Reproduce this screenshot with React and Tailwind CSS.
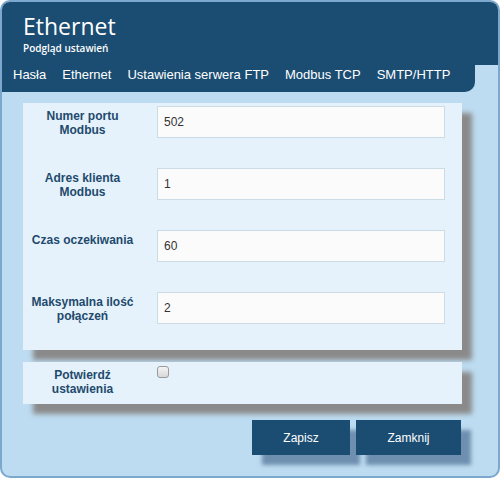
import React, { useState } from "react";

const fields = [
  { label: ["Numer portu", "Modbus"], value: "502" },
  { label: ["Adres klienta", "Modbus"], value: "1" },
  { label: ["Czas oczekiwania"], value: "60" },
  { label: ["Maksymalna ilość", "połączeń"], value: "2" },
];

const tabs = ["Hasła", "Ethernet", "Ustawienia serwera FTP", "Modbus TCP", "SMTP/HTTP"];

export default function App() {
  const [vals, setVals] = useState(fields.map(f => f.value));
  const [ok, setOk] = useState(false);

  return (
    <div className="w-[500px] h-[478px] box-border border-2 border-[#7ba8cc] rounded-[10px] bg-[#bddcf1] overflow-hidden font-['Liberation_Sans',Arial,sans-serif]">
      {/* header */}
      <div className="bg-[#1b4d72] h-[63px] pl-[21px] pt-[11px] text-white">
        <div className="font-['Open_Sans',sans-serif] text-[23px] leading-[26px]">Ethernet</div>
        <div className="font-['Open_Sans',sans-serif] font-semibold text-[10px] leading-[12px] mt-[3px]">Podgląd ustawień</div>
      </div>
      <div className="w-[473px] h-[27px] bg-[#1b4d72] rounded-br-[10px] flex items-start gap-[16px] pl-[11px] pt-[2px] text-white text-[13px] leading-[15px]">
        {tabs.map(t => (
          <span key={t} className="cursor-pointer">{t}</span>
        ))}
      </div>

      {/* fields */}
      <div className="ml-[21px] mt-[11px] w-[439px]">
        <div className="bg-[#e5f2fb] pt-[3px] pb-[26px] flex flex-col gap-[30px] shadow-[10px_10px_5px_#8a8a8a]">
          {fields.map((f, i) => (
            <div key={i} className="flex items-start">
              <div className="w-[119px] pt-[3px] text-center text-[12px] leading-[14px] font-bold text-[#1f4a6d]">
                {f.label.map(l => <div key={l}>{l}</div>)}
              </div>
              <input
                className="ml-[15px] w-[288px] h-[32px] box-border border border-[#cbdce7] bg-[#fbfbfb] pl-[6px] text-[12px] text-[#333] outline-none"
                value={vals[i]}
                onChange={e => setVals(v => v.map((x, j) => (j === i ? e.target.value : x)))}
              />
            </div>
          ))}
        </div>

        <div className="mt-[12px] h-[42px] bg-[#e5f2fb] flex items-start shadow-[10px_10px_5px_#8a8a8a]">
          <div className="w-[119px] pt-[6px] text-center text-[12px] leading-[14px] font-bold text-[#1f4a6d]">
            <div>Potwierdź</div>
            <div>ustawienia</div>
          </div>
          <button
            onClick={() => setOk(!ok)}
            className="ml-[15px] mt-[4px] w-[12px] h-[12px] rounded-[3px] border border-[#9a9a9a] bg-gradient-to-b from-[#f4f4f4] to-[#d8d8d8] flex items-center justify-center text-[9px] leading-none text-[#333]"
          >
            {ok ? "✓" : ""}
          </button>
        </div>

        <div className="mt-[16px] flex justify-end gap-[6px] pr-[1px]">
          <button className="w-[98px] h-[35px] bg-[#1b4d72] text-white text-[12px] shadow-[10px_10px_4px_rgba(45,80,120,0.55)]">Zapisz</button>
          <button className="w-[105px] h-[35px] bg-[#1b4d72] text-white text-[12px] shadow-[10px_10px_4px_rgba(45,80,120,0.55)]">Zamknij</button>
        </div>
      </div>
    </div>
  );
}
